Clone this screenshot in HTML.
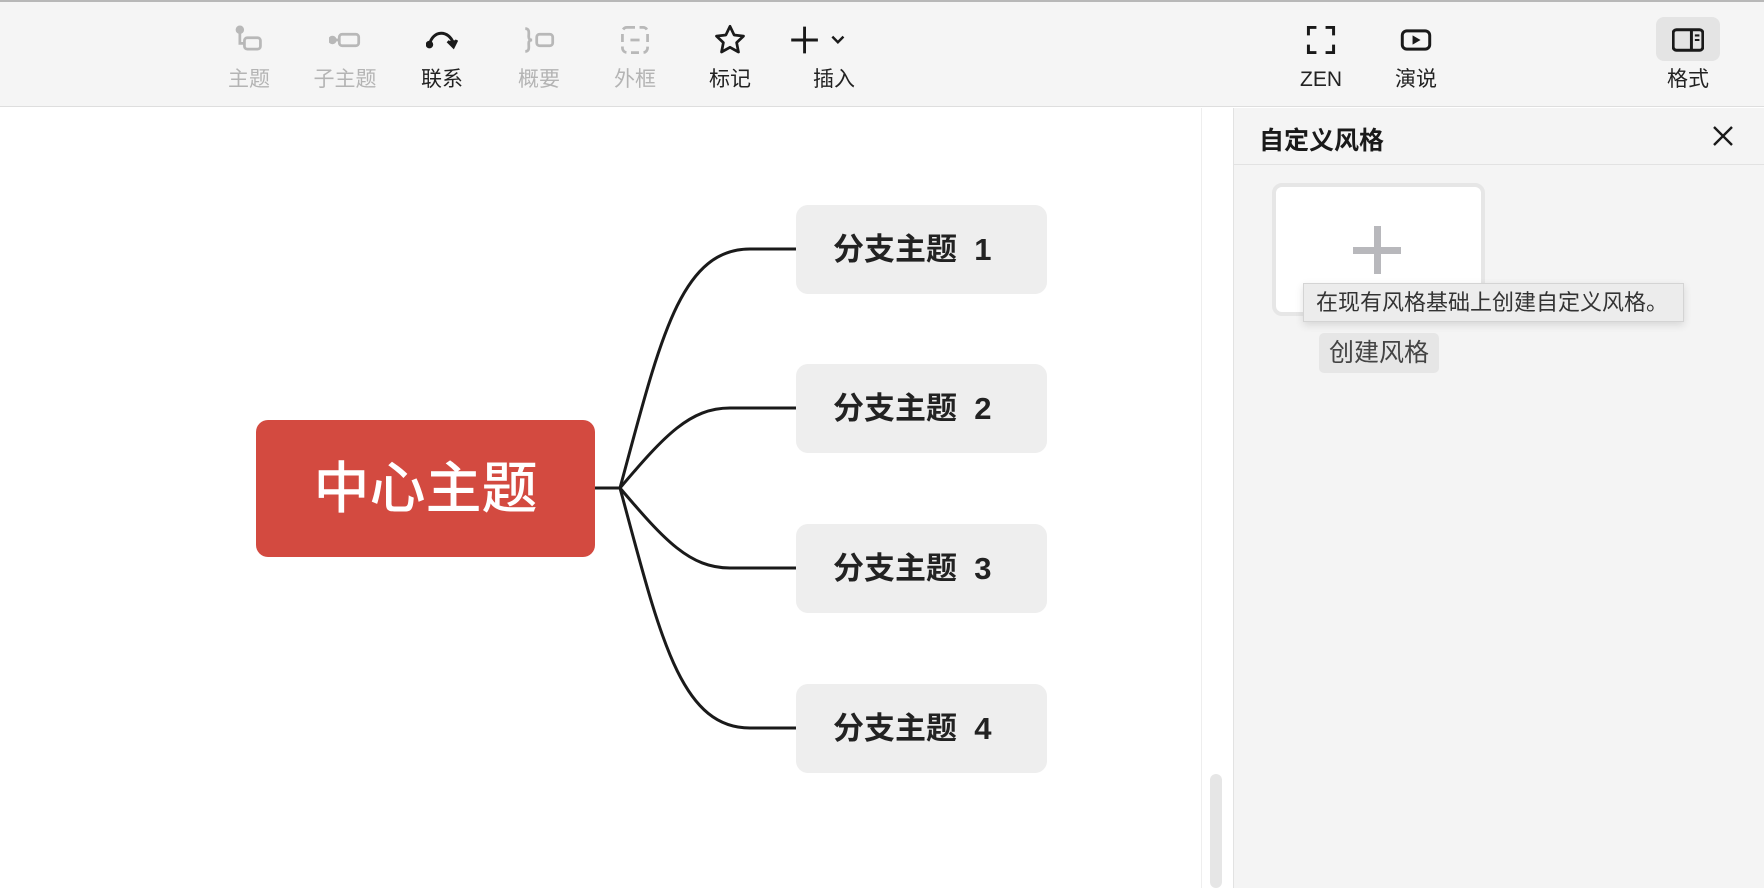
<!DOCTYPE html>
<html><head><meta charset="utf-8"><style>
*{margin:0;padding:0;box-sizing:border-box}
body{width:1764px;height:888px;overflow:hidden;background:#fff;font-family:"Liberation Sans","Noto Sans CJK SC",sans-serif;position:relative}
.tb{position:absolute;left:0;top:0;width:1764px;height:107px;background:#f5f5f5;border-bottom:1px solid #dedede;border-top:2px solid #b8b8b8}
.it{position:absolute;top:0;width:90px;margin-left:-45px;text-align:center}
.it svg{position:absolute;left:29px;top:22px}
.it span{position:absolute;left:0;width:90px;top:65px;font-size:21px;line-height:26px;color:#222}
.dis span{color:#b4b4b4}
.panel{position:absolute;left:1233px;top:108px;width:531px;height:780px;background:#f4f4f4;border-left:1px solid #e2e2e2}
.node{position:absolute;left:796px;width:251px;height:89px;background:#eeeeee;border-radius:12px;font-size:31px;font-weight:bold;color:#222;line-height:89px;padding-left:37px;white-space:pre}
</style></head><body>
<div class="tb">
<div class="it dis" style="left:249px"><svg width="32" height="32" viewBox="0 0 28 28" fill="none" stroke="#b8b8b8" stroke-width="2.4"><circle cx="6" cy="5" r="2.5" fill="#b8b8b8"/><path d="M6 7v10h4"/><rect x="10" y="12" width="14" height="10" rx="2.5"/></svg><span>主题</span></div>
<div class="it dis" style="left:345px"><svg width="32" height="32" viewBox="0 0 28 28" fill="none" stroke="#b8b8b8" stroke-width="2.4"><circle cx="3" cy="14" r="2.5" fill="#b8b8b8"/><path d="M5 14h4"/><rect x="9" y="9" width="17" height="10" rx="2.5"/></svg><span>子主题</span></div>
<div class="it" style="left:442px"><svg width="32" height="32" viewBox="0 0 28 28" fill="none" stroke="#1a1a1a" stroke-width="2.6"><path d="M3 18C6 5 20 5 24 17"/><circle cx="3" cy="18" r="2" fill="#1a1a1a"/><path d="M19 15l5 5 3-6" fill="#1a1a1a"/></svg><span>联系</span></div>
<div class="it dis" style="left:539px"><svg width="32" height="32" viewBox="0 0 28 28" fill="none" stroke="#b8b8b8" stroke-width="2.4"><path d="M2 4c4 0 3 4 3 7s2 3 3 3c-1 0-3 0-3 3s1 7-3 7"/><rect x="12" y="9" width="14" height="10" rx="2.5"/></svg><span>概要</span></div>
<div class="it dis" style="left:635px"><svg width="32" height="32" viewBox="0 0 28 28" fill="none" stroke="#b8b8b8" stroke-width="2.4"><rect x="3" y="3" width="22" height="22" rx="4" stroke-dasharray="7 4"/><path d="M10 14h8"/></svg><span>外框</span></div>
<div class="it" style="left:730px"><svg width="32" height="32" viewBox="0 0 28 28" fill="none" stroke="#1a1a1a" stroke-width="2.4" stroke-linejoin="round"><path d="M14 2l3.6 7.6 8.2 1-6 5.7 1.6 8.2L14 20.4l-7.4 4.1 1.6-8.2-6-5.7 8.2-1z"/></svg><span>标记</span></div>
<div class="it" style="left:834px"><svg style="left:0" width="60" height="32" viewBox="0 0 54 28" fill="none" stroke="#1a1a1a" stroke-width="2.6"><path d="M14 2v24M2 14h24"/><path d="M39 11l5 5 5-5" stroke-width="2.2"/></svg><span>插入</span></div>
<div class="it" style="left:1321px"><svg width="32" height="32" viewBox="0 0 28 28" fill="none" stroke="#1a1a1a" stroke-width="2.6"><path d="M3 10V3h7M18 3h7v7M25 18v7h-7M10 25H3v-7"/></svg><span>ZEN</span></div>
<div class="it" style="left:1416px"><svg width="32" height="32" viewBox="0 0 28 28" fill="none" stroke="#1a1a1a" stroke-width="2.6"><rect x="2" y="6" width="24" height="16" rx="4"/><path d="M11 10l7 4-7 4z" fill="#1a1a1a" stroke="none"/></svg><span>演说</span></div>
<div style="position:absolute;left:1656px;top:15px;width:64px;height:44px;background:#e4e4e4;border-radius:8px"></div>
<div class="it" style="left:1688px"><svg width="32" height="32" viewBox="0 0 28 28" fill="none" stroke="#1a1a1a" stroke-width="2.6"><rect x="1" y="5" width="26" height="18" rx="3"/><path d="M17 5v18"/><path d="M20 10h4M20 14h4" stroke-width="1.8"/></svg><span>格式</span></div>
</div>
<div style="position:absolute;left:1201px;top:108px;width:1px;height:780px;background:#eeeeee"></div>
<div style="position:absolute;left:1210px;top:774px;width:12px;height:114px;background:#e6e6e6;border-radius:6px"></div>
<div class="panel">
<div style="position:absolute;left:25px;top:13px;font-size:25px;font-weight:bold;color:#1a1a1a">自定义风格</div>
<svg style="position:absolute;left:478px;top:17px" width="22" height="22" viewBox="0 0 22 22" stroke="#1a1a1a" stroke-width="2.4"><path d="M2 2l18 18M20 2L2 20"/></svg>
<div style="position:absolute;left:0;top:56px;width:531px;height:1px;background:#e2e2e2"></div>
<div style="position:absolute;left:38px;top:75px;width:213px;height:133px;background:#fff;border:4px solid #e6e6e6;border-radius:10px"></div>
<div style="position:absolute;left:119px;top:118px;width:48px;height:48px"><div style="position:absolute;left:21px;top:0;width:7px;height:48px;background:#b8b8bc"></div><div style="position:absolute;left:0;top:21px;width:48px;height:7px;background:#b8b8bc"></div></div>
<div style="position:absolute;left:69px;top:175px;width:381px;height:39px;background:#ececec;border:1px solid #d4d4d4;box-shadow:0 3px 8px rgba(0,0,0,.12);font-size:22px;color:#333;line-height:37px;padding-left:12px;white-space:nowrap">在现有风格基础上创建自定义风格。</div>
<div style="position:absolute;left:85px;top:225px;width:120px;height:40px;background:#e6e6e6;border-radius:5px;font-size:25px;color:#444;line-height:40px;text-align:center">创建风格</div>
</div>
<svg style="position:absolute;left:0;top:0" width="1200" height="888" fill="none" stroke="#1a1a1a" stroke-width="3">
<path d="M595 488H620C660 340 680 249 750 249H796"/>
<path d="M620 488C665 435 690 408 730 408H796"/>
<path d="M620 488C665 541 690 568 730 568H796"/>
<path d="M620 488C660 636 680 728 750 728H796"/>
</svg>
<div style="position:absolute;left:256px;top:420px;width:339px;height:137px;background:#d34a40;border-radius:12px;color:#fff;font-size:56px;font-weight:500;text-align:center;line-height:137px">中心主题</div>
<div class="node" style="top:205px">分支主题  1</div>
<div class="node" style="top:364px">分支主题  2</div>
<div class="node" style="top:524px">分支主题  3</div>
<div class="node" style="top:684px">分支主题  4</div>
</body></html>
